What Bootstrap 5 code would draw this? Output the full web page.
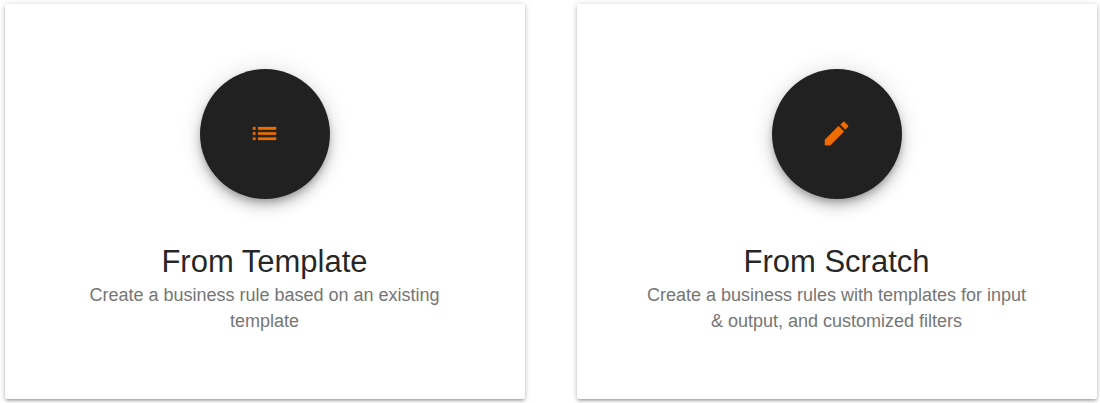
<!DOCTYPE html>
<html lang="en">
<head>
<meta charset="utf-8">
<meta name="viewport" content="width=device-width, initial-scale=1">
<title>Create a business rule</title>
<link href="https://cdn.jsdelivr.net/npm/bootstrap@5.3.0/dist/css/bootstrap.min.css" rel="stylesheet">
<style>
body{font-family:"Liberation Sans",Arial,sans-serif;background:#fff;overflow:hidden}
.choices{padding:4px 3px 4px 5px;gap:52px;height:403px}
.choice{width:520px;height:395px;border:0;border-radius:2px;padding-top:65px;box-shadow:0 1px 6px rgba(0,0,0,.2),0 2px 3px rgba(0,0,0,.16),0 3px 2px -2px rgba(0,0,0,.12)}
.round-btn{width:130px;height:130px;background:#212121;border:0;color:#ef6c00;box-shadow:0 4px 6px -1px rgba(0,0,0,.22),0 8px 13px rgba(0,0,0,.16),0 1px 23px rgba(0,0,0,.12)}
.round-btn svg{margin:0 1px 1px 0;stroke:currentColor;stroke-width:.2}
.choice h2{font-size:31px;line-height:36px;margin:45px 1px 0 0;font-weight:400;color:rgba(0,0,0,.87)}
.choice p{font-size:18px;line-height:26px;margin:2px 1px 0 0;color:#757575;width:390px}
</style>
</head>
<body>
<main class="choices d-flex">
  <section class="card choice align-items-center text-center flex-shrink-0">
    <button class="round-btn rounded-circle d-flex align-items-center justify-content-center p-0" aria-label="From Template">
      <svg width="31" height="31" viewBox="0 0 24 24" fill="currentColor"><path d="M3 13h2v-2H3v2zm0 4h2v-2H3v2zm0-8h2V7H3v2zm4 4h14v-2H7v2zm0 4h14v-2H7v2zM7 7v2h14V7H7z"/></svg>
    </button>
    <h2>From Template</h2>
    <p>Create a business rule based on an existing template</p>
  </section>
  <section class="card choice align-items-center text-center flex-shrink-0">
    <button class="round-btn rounded-circle d-flex align-items-center justify-content-center p-0" aria-label="From Scratch">
      <svg width="31" height="31" viewBox="0 0 24 24" fill="currentColor"><path d="M3 16.75V21h4.25L17.75 10.4l-4.2-4.2L3 16.75zM20.71 7.04c.39-.39.39-1.02 0-1.41l-2.34-2.34c-.39-.39-1.02-.39-1.41 0l-1.93 1.93 3.75 3.75 1.93-1.93z"/></svg>
    </button>
    <h2>From Scratch</h2>
    <p>Create a business rules with templates for input &amp; output, and customized filters</p>
  </section>
</main>
<script src="https://cdn.jsdelivr.net/npm/bootstrap@5.3.0/dist/js/bootstrap.bundle.min.js"></script>
</body>
</html>
